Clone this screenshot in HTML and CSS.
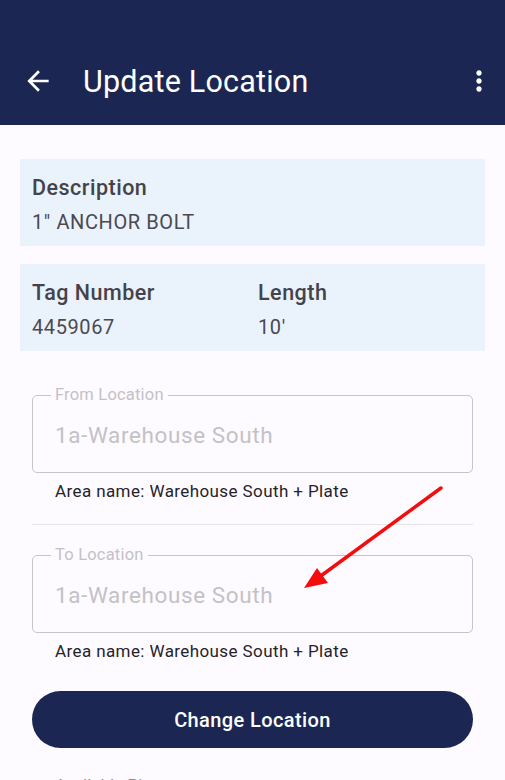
FILE: index.html
```html
<!DOCTYPE html>
<html lang="en">
<head>
<meta charset="UTF-8">
<meta name="viewport" content="width=device-width, initial-scale=1.0">
<title>Update Location</title>
<link rel="stylesheet" href="styles.css">
</head>
<body>

<div class="screen">
  <header class="appbar">
    <div class="toolbar">
      <button class="icon-btn back" aria-label="Back">
        <svg width="32" height="32" viewBox="0 0 24 24"><path fill="#fff" d="M20 11H7.83l5.59-5.59L12 4l-8 8 8 8 1.41-1.41L7.83 13H20v-2z"/></svg>
      </button>
      <h1 class="title">Update Location</h1>
      <button class="icon-btn menu" aria-label="More">
        <svg width="32" height="32" viewBox="0 0 24 24"><path fill="#fff" d="M12 8c1.1 0 2-.9 2-2s-.9-2-2-2-2 .9-2 2 .9 2 2 2zm0 2c-1.1 0-2 .9-2 2s.9 2 2 2 2-.9 2-2-.9-2-2-2zm0 6c-1.1 0-2 .9-2 2s.9 2 2 2 2-.9 2-2-.9-2-2-2z"/></svg>
      </button>
    </div>
  </header>

  <main class="content">
    <section class="card">
      <div class="info">
        <div class="label">Description</div>
        <div class="value">1" ANCHOR BOLT</div>
      </div>
    </section>

    <section class="card two-col">
      <div class="info">
        <div class="label">Tag Number</div>
        <div class="value">4459067</div>
      </div>
      <div class="info">
        <div class="label">Length</div>
        <div class="value">10'</div>
      </div>
    </section>

    <div class="field first">
      <fieldset class="outline">
        <legend>From Location</legend>
        <div class="field-value">1a-Warehouse South</div>
      </fieldset>
      <div class="helper">Area name: Warehouse South + Plate</div>
    </div>

    <hr class="divider">

    <div class="field">
      <fieldset class="outline">
        <legend>To Location</legend>
        <div class="field-value">1a-Warehouse South</div>
      </fieldset>
      <div class="helper">Area name: Warehouse South + Plate</div>
    </div>

    <button class="primary">Change Location</button>

    <div class="section-title">Available Pieces</div>
  </main>

  <svg class="callout" width="505" height="780" viewBox="0 0 505 780">
    <line x1="441" y1="488" x2="318" y2="578" stroke="#f40d0d" stroke-width="3.5" stroke-linecap="round"/>
    <polygon points="304,588 317,568 328,583" fill="#f40d0d"/>
  </svg>
</div>

</body>
</html>
```

FILE: styles.css
```css
body {
  margin: 0;
  font-family: Roboto, "Noto Sans", sans-serif;
  background-color: #fdfbff;
}
.screen {
  position: relative;
  width: 505px;
  height: 780px;
  overflow: hidden;
}
.appbar {
  height: 125px;
  background-color: #1b2752;
}
.toolbar {
  display: flex;
  align-items: center;
  height: 82px;
  padding-top: 40px;
}
.icon-btn {
  display: flex;
  align-items: center;
  justify-content: center;
  width: 48px;
  height: 48px;
  padding: 0;
  border: none;
  background: none;
}
.back { margin-left: 14px; }
.menu { margin-left: auto; margin-right: 2px; }
.title {
  margin: 0 0 0 21px;
  font-size: 30.5px;
  font-weight: 400;
  color: #fff;
  letter-spacing: 0.2px;
}
.content {
  padding: 34px 20px 0;
}
.card {
  display: grid;
  grid-template-columns: 226px 1fr;
  padding: 14px 12px 9px;
  margin-bottom: 18px;
  background-color: #eaf2fc;
}
.label {
  font-size: 21.5px;
  font-weight: 500;
  line-height: 30px;
  color: #45434a;
  letter-spacing: 0.5px;
}
.value {
  margin-top: 4px;
  font-size: 20px;
  line-height: 30px;
  color: #4b4950;
  letter-spacing: 0.6px;
}
.field {
  padding: 0 12px;
}
.field.first { margin-top: 36px; }
.outline {
  margin: 0;
  height: 86px;
  box-sizing: border-box;
  padding: 0 22px;
  border: 1px solid #c7c4c9;
  border-radius: 5px;
}
.outline legend {
  margin-left: -4px;
  padding: 0 4px;
  font-size: 16.5px;
  line-height: 16px;
  color: #c4c1c6;
  letter-spacing: 0.2px;
}
.field-value {
  padding-top: 19px;
  font-size: 22.5px;
  color: #c4c1c6;
  letter-spacing: 0.6px;
}
.helper {
  padding: 8px 0 0 23px;
  font-size: 17px;
  line-height: 20px;
  color: #25232a;
  letter-spacing: 0.4px;
}
.divider {
  margin: 23px 12px 22px;
  border: none;
  border-top: 1px solid #e7e4e8;
}
.primary {
  display: block;
  width: calc(100% - 24px);
  height: 57px;
  margin: 30px 12px 0;
  border: none;
  border-radius: 29px;
  background-color: #1b2752;
  color: #fff;
  font-family: Roboto, sans-serif;
  font-size: 20px;
  font-weight: 500;
  letter-spacing: 0.4px;
}
.section-title {
  margin: 27px 0 0 35px;
  font-size: 17px;
  line-height: 20px;
  color: #8f8c92;
}
.callout {
  position: absolute;
  top: 0;
  left: 0;
  pointer-events: none;
}
```
